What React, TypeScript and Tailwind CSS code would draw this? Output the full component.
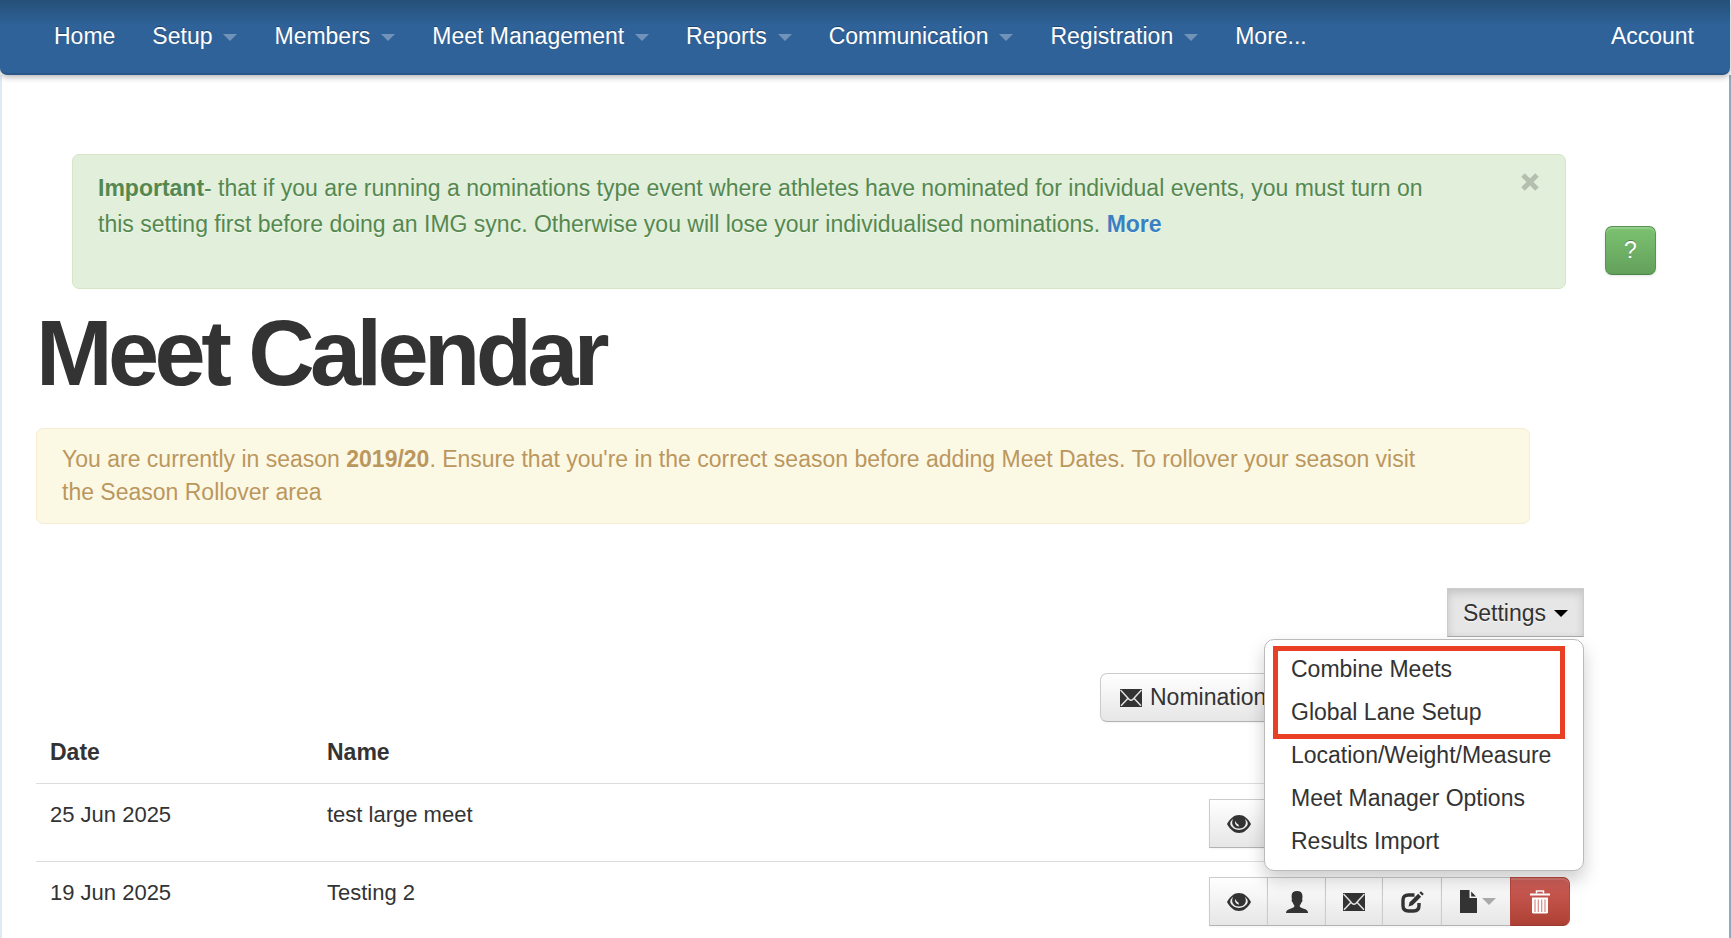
import React from 'react';

const navItems = [
    { label: 'Home', caret: false },
    { label: 'Setup', caret: true },
    { label: 'Members', caret: true },
    { label: 'Meet Management', caret: true },
    { label: 'Reports', caret: true },
    { label: 'Communication', caret: true },
    { label: 'Registration', caret: true },
    { label: 'More...', caret: false },
];

const highlightedSettings = ['Combine Meets', 'Global Lane Setup'];
const otherSettings = ['Location/Weight/Measure', 'Meet Manager Options', 'Results Import'];

const meets = [
    { date: '25 Jun 2025', name: 'test large meet' },
    { date: '19 Jun 2025', name: 'Testing 2' },
];

const Caret = ({ className }: { className: string }) => (
    <svg width="14" height="7" viewBox="0 0 14 7" className={className} aria-hidden="true">
        <path d="M0 0h14L7 7z" fill="currentColor" />
    </svg>
);

const CloseIcon = () => (
    <svg width="18" height="18" viewBox="0 0 18 18" aria-hidden="true">
        <path d="M2 2l14 14M16 2L2 16" stroke="currentColor" strokeWidth="5" />
    </svg>
);

const EyeIcon = () => (
    <svg width="24" height="18" viewBox="0 0 24 18" aria-hidden="true">
        <path d="M0 9C3 3.400 7.200 0 12 0s9 3.400 12 9c-3 5.600-7.200 9-12 9S3 14.600 0 9z" fill="#333" />
        <path d="M6.300 3.800C3.800 5.600 3 7.600 3.300 9.600c1.400 3.200 4.800 5.400 8.700 5.400s7.300-2.200 8.700-5.400c.3-2-.5-4-3-5.800 1.200 2 1.500 4.200.6 6.200-1 2.300-3.400 3.600-6.300 3.600s-5.300-1.300-6.300-3.600c-.9-2-.6-4.200.6-6.200z" fill="#eee" />
        <path d="M8.200 5.800c-.8 2.700.7 5.400 4 5.900L11.200 9.200C9.600 8.700 8.800 7.400 8.200 5.800z" fill="#eee" />
    </svg>
);

const UserIcon = () => (
    <svg width="22" height="22" viewBox="0 0 22 22" aria-hidden="true">
        <path d="M11 0c3.600 0 5.500 1.800 5.500 5.200 0 1.200-.1 2.400-.4 3.400.5.300.5 1.500-.1 2.200-.3.400-.6.500-.7.900-.3 1.100-.9 1.900-1.500 2.500v1.300c.5 1.100 2.100 1.600 4 2.200 2.600.8 4.100 1.600 4.300 4.300H0c.2-2.700 1.700-3.500 4.300-4.300 1.900-.6 3.500-1.100 4-2.200v-1.300c-.6-.6-1.200-1.400-1.500-2.500-.1-.4-.4-.5-.7-.9-.6-.7-.6-1.900-.1-2.200-.3-1-.4-2.200-.4-3.400C5.500 1.800 7.400 0 11 0z" fill="#333" />
    </svg>
);

const EnvelopeIcon = () => (
    <svg width="22" height="18" viewBox="0 0 22 18" aria-hidden="true">
        <path d="M0 0h22v18H0z" fill="#333" />
        <path d="M.5 1l8.500 9.200c1.200 1.200 2.800 1.200 4 0L21.500 1M1 16.800l6.600-7M21 16.800l-6.600-7" fill="none" stroke="#e4e4e4" strokeWidth="1.500" />
    </svg>
);

const EditIcon = () => (
    <svg width="23" height="22" viewBox="0 0 23 22" aria-hidden="true">
        <path d="M13.500 4H7.500C3.800 4 2 5.800 2 9v5.500c0 3.700 1.800 5.500 5.500 5.500h5c3.700 0 5.500-1.800 5.500-5.500V12" fill="none" stroke="#333" strokeWidth="3.400" />
        <path d="M7.500 15.500l1.200-4.200 8.500-8.500 2.900 2.900-8.500 8.500z" fill="#333" />
        <path d="M18.400 1.700L20 .2l2.800 2.800-1.600 1.500z" fill="#333" />
    </svg>
);

const FileIcon = () => (
    <svg width="17" height="23" viewBox="0 0 17 23" aria-hidden="true">
        <path d="M0 0h9.500v8H17v15H0z" fill="#333" />
        <path d="M11.200 1.500L16 6.500h-4.800z" fill="#333" />
    </svg>
);

const TrashIcon = () => (
    <svg width="20" height="24" viewBox="0 0 20 24" aria-hidden="true">
        <path d="M6.500 3.500V1h7v2.500" fill="none" stroke="#fff" strokeWidth="1.500" />
        <path d="M0 3.500h20v2H0z" fill="#fff" />
        <path d="M2 7.500h16V22.500l-1 1H3l-1-1z" fill="#fff" />
        <path d="M5 9.500V22M8.300 9.500V22M11.700 9.500V22M15 9.500V22" stroke="#d98a84" strokeWidth="1.200" />
    </svg>
);

const groupButton =
    'flex h-[49px] items-center justify-center border border-[#ccc] border-b-[#b3b3b3] bg-linear-to-b from-white to-[#e6e6e6] shadow-[0_1px_2px_rgba(0,0,0,0.05)]';

const RowActions = () => (
    <div className="flex">
        <button type="button" aria-label="View" className={`${groupButton} w-[59px]`}><EyeIcon /></button>
        <button type="button" aria-label="Athletes" className={`${groupButton} -ml-px w-[59px]`}><UserIcon /></button>
        <button type="button" aria-label="Email" className={`${groupButton} -ml-px w-[58px]`}><EnvelopeIcon /></button>
        <button type="button" aria-label="Edit" className={`${groupButton} -ml-px w-[60px]`}><EditIcon /></button>
        <button type="button" aria-label="Files" className={`${groupButton} -ml-px w-[70px] gap-[5px] pl-[4px]`}>
            <FileIcon />
            <Caret className="text-[#aaa]" />
        </button>
        <button
            type="button"
            aria-label="Delete"
            className="-ml-px flex h-[49px] w-[60px] items-center justify-center rounded-r-[7px] border border-[#b5483f] border-b-[#97372f] bg-linear-to-b from-[#d0605a] to-[#ad4034] shadow-[inset_0_2px_0_rgba(255,255,255,0.15)]"
        >
            <TrashIcon />
        </button>
    </div>
);

const SettingsItem = ({ label }: { label: string }) => (
    <li>
        <a href="#" className="block px-[26px] py-[5px] leading-[33px]">{label}</a>
    </li>
);

const NavBar = () => (
    <nav className="relative z-10 mr-px flex h-[75px] items-start justify-between rounded-b-[7px] border-b-2 border-[#2a5788] bg-linear-to-b from-[#255078] via-[#2f6299] via-35% to-[#2f6299] pt-[21px] pr-[36px] pl-[54px] leading-[30px] text-white shadow-[0_2px_6px_rgba(0,0,0,0.3)]">
        <ul className="flex gap-[37px] [text-shadow:0_-1px_0_rgba(0,0,0,0.3)]">
            {navItems.map((item) => (
                <li key={item.label}>
                    <a href="#" className="flex items-center gap-[11px]">
                        {item.label}
                        {item.caret && <Caret className="mt-[3px] text-[#7293b9]" />}
                    </a>
                </li>
            ))}
        </ul>
        <a href="#">Account</a>
    </nav>
);

export default function App() {
    return (
        <div className="flex min-h-screen flex-col bg-white font-['Liberation_Sans',Arial,sans-serif] text-[23px] text-[#333]">
            <NavBar />

            <main className="flex-1 border-r-2 border-l-2 border-r-[#93a9b9] border-l-[#dceaf4] pt-[79px] pl-[34px]">
                <div className="flex items-start pr-[73px] pl-[36px]">
                    <div className="flex flex-1 items-start justify-between rounded-[7px] border border-[#d6e6c5] bg-[#e2efdb] pt-[15px] pr-[26px] pb-[46px] pl-[25px] leading-[36px] text-[#54884f] [text-shadow:0_1px_0_rgba(255,255,255,0.5)]">
                        <p className="flex-1 pr-[76px]">
                            <strong>Important</strong>- that if you are running a nominations type event where athletes have nominated for individual events, you must turn on this setting first before doing an IMG sync. Otherwise you will lose your individualised nominations.{' '}
                            <a href="#" className="font-bold text-[#3a80c3]">More</a>
                        </p>
                        <button type="button" aria-label="Close" className="mt-[3px] text-black/20"><CloseIcon /></button>
                    </div>
                    <button
                        type="button"
                        className="mt-[72px] ml-[39px] h-[49px] w-[51px] rounded-[7px] border border-[#589450] border-b-[#4b8444] bg-linear-to-b from-[#7bc270] to-[#64a05b] text-white shadow-[inset_0_2px_0_rgba(255,255,255,0.2),0_1px_3px_rgba(0,0,0,0.1)] [text-shadow:0_-1px_0_rgba(0,0,0,0.3)]"
                    >
                        ?
                    </button>
                </div>

                <h1 className="mt-[18px] text-[92px] leading-[92px] font-bold tracking-tighter">Meet Calendar</h1>

                <div className="mt-[29px] mr-[199px] rounded-[7px] border border-[#f7ecd0] bg-[#fbf8e4] pt-[14px] pr-[95px] pb-[14px] pl-[25px] leading-[33px] text-[#bb975c] [text-shadow:0_1px_0_rgba(255,255,255,0.5)]">
                    You are currently in season <strong>2019/20</strong>. Ensure that you're in the correct season before adding Meet Dates. To rollover your season visit the Season Rollover area
                </div>

                <div className="mt-[64px] mr-[145px]">
                    <div className="relative flex justify-end">
                        <button
                            type="button"
                            aria-expanded="true"
                            className="flex h-[49px] items-center gap-[8px] border border-[#ccc] border-b-[#a9a9a9] bg-[#e6e6e6] px-[15px] pt-px shadow-[inset_0_4px_8px_rgba(0,0,0,0.15)] [text-shadow:0_1px_1px_rgba(255,255,255,0.75)]"
                        >
                            Settings
                            <Caret className="text-black" />
                        </button>
                        <div className="absolute top-full right-0 z-20 mt-[2px] w-[320px] rounded-[10px] border border-[#bbb] bg-white pt-[8px] pb-[7px] shadow-[0_9px_18px_rgba(0,0,0,0.2)]">
                            <div className="pointer-events-none absolute top-[6px] right-[18px] left-[8px] h-[93px] border-5 border-[#e94025]" />
                            <ul>
                                {[...highlightedSettings, ...otherSettings].map((label) => (
                                    <SettingsItem key={label} label={label} />
                                ))}
                            </ul>
                        </div>
                    </div>

                    <div className="mt-[36px] flex justify-end">
                        <button
                            type="button"
                            className="flex h-[49px] w-[484px] items-center gap-[8px] rounded-[7px] border border-[#ccc] border-b-[#b3b3b3] bg-linear-to-b from-white to-[#e6e6e6] pl-[19px] shadow-[0_1px_2px_rgba(0,0,0,0.05)]"
                        >
                            <EnvelopeIcon />
                            Nominations
                        </button>
                    </div>

                    <table className="w-full text-left">
                        <thead>
                            <tr className="leading-[36px]">
                                <th className="w-[277px] pt-[12px] pb-[13px] pl-[14px]">Date</th>
                                <th className="pt-[12px] pb-[13px] pl-[14px]">Name</th>
                                <th className="w-[375px]"><span className="sr-only">Actions</span></th>
                            </tr>
                        </thead>
                        <tbody>
                            {meets.map((meet) => (
                                <tr key={meet.date} className="border-t border-[#ddd] align-top text-[22px] leading-[36px]">
                                    <td className="pt-[13px] pl-[14px]">{meet.date}</td>
                                    <td className="pt-[13px] pl-[14px]">{meet.name}</td>
                                    <td className="pt-[15px] pb-[13px]"><RowActions /></td>
                                </tr>
                            ))}
                        </tbody>
                    </table>
                </div>
            </main>
        </div>
    );
}
